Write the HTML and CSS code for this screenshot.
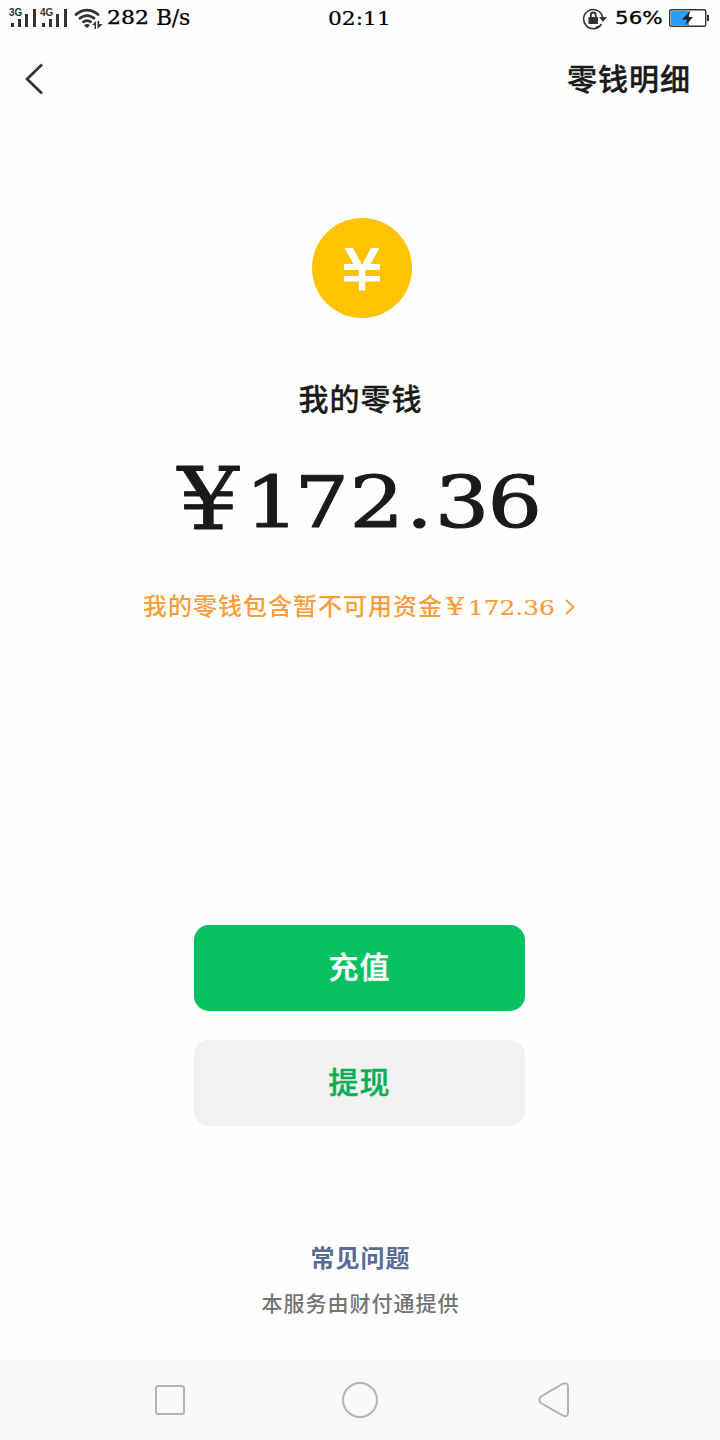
FILE: index.html
```html
<!DOCTYPE html>
<html lang="zh-CN">
<head>
<meta charset="utf-8">
<title>零钱</title>
<link rel="stylesheet" href="styles.css">
</head>
<body>
<div class="screen">
  <div class="status">
    <div class="status-left">
      <svg class="signal" width="104" height="36" viewBox="0 0 104 36" fill="#333">
        <text class="net" x="9" y="16">3G</text>
        <path d="M11 23h3v4h-3zM18 19h3v8h-3zM25 14h3v13h-3zM33 9h3v18h-3z"/>
        <text class="net" x="40" y="16">4G</text>
        <path d="M42 23h3v4h-3zM49 19h3v8h-3zM56 14h3v13h-3zM64 9h3v18h-3z"/>
        <g fill="none" stroke="#333" stroke-width="2.6">
          <path d="M75 15.200Q87 5 99 15.200"/><path d="M79 19Q87 12.200 95 19"/><path d="M82.500 22.500Q87 18.700 91.500 22.500"/>
        </g>
        <path d="M84 25.300Q87 22.800 90 25.300L87 28zM92 25l4-4v8h-1.500v-4zM97.500 21v8l5-5h-3.300v-3z"/>
      </svg>
      <span class="speed"><span class="speed-num">282</span><span class="unit">B/s</span></span>
    </div>
    <span class="clock">02:11</span>
    <div class="status-right">
      <svg width="26" height="24" viewBox="0 0 26 24">
        <path d="M19.500 18A9.600 9.600 0 1 1 20.600 11M18.500 19.500A9.600 9.600 0 0 1 14 21.400" fill="none" stroke="#333" stroke-width="1.600"/>
        <path d="M17 11h8l-4 5z" fill="#333"/>
        <path d="M6.500 11h9.500v7H6.500z" fill="#333"/>
        <path d="M8.800 11V9a2.500 2.500 0 0 1 5 0v2" fill="none" stroke="#333" stroke-width="1.800"/>
      </svg>
      <span class="percent">56%</span>
      <svg width="41" height="20" viewBox="0 0 41 20">
        <rect x=".7" y="1.700" width="36" height="16.600" rx="1.500" fill="#fff" stroke="#333" stroke-width="1.400"/>
        <path d="M2 3h18v14H2z" fill="#259ffb"/>
        <path d="M21.500 2.500l-8.500 9h5l-1.500 6 7.500-8.500h-4.500z" fill="#222"/>
        <path d="M38 7h2v6h-2z" fill="#333"/>
      </svg>
    </div>
  </div>
  <header class="header">
    <svg width="22" height="34" viewBox="0 0 22 34"><path d="M18 2.500L3 17l15 14.500" fill="none" stroke="#333" stroke-width="2.700"/></svg>
    <span class="detail">零钱明细</span>
  </header>
  <main class="main">
    <svg class="coin" width="100" height="100" viewBox="0 0 100 100">
      <circle cx="50" cy="50" r="50" fill="#ffc300"/>
      <path d="M32.500 30h8.500l8.500 16h1L59 30h8.500l-9 16h9.500v6H53.200v6H68v5.500H53.200V72.500h-6.400V63.500H32V58h14.800v-6H32v-6h9.500z" fill="#fff"/>
    </svg>
    <h1 class="title">我的零钱</h1>
    <svg class="amount" width="400" height="100" viewBox="0 0 400 100">
      <text class="yen" transform="translate(17.500 78) scale(1.130 1)">¥</text>
      <text class="digits" transform="translate(80 75.500) scale(1.210 1)" x="4 45 90.500 137 161 204.500">172.36</text>
    </svg>
    <div class="notice"><span class="notice-text">我的零钱包含暂不可用资金</span><span class="notice-yen">¥</span><span class="notice-num">172.36</span>
      <svg width="12" height="18" viewBox="0 0 12 18"><path d="M2 2l7.500 7L2 16" fill="none" stroke="#fa9d3b" stroke-width="1.800"/></svg>
    </div>
    <div class="actions">
      <button class="btn primary">充值</button>
      <button class="btn secondary">提现</button>
    </div>
    <div class="faq">常见问题</div>
    <div class="provider">本服务由财付通提供</div>
  </main>
  <nav class="nav">
    <svg width="720" height="80" viewBox="0 0 720 80" fill="none" stroke="#b4b4b4" stroke-width="2">
      <rect x="156" y="26" width="28" height="28" rx="2.500"/>
      <circle cx="360" cy="40" r="17"/>
      <path d="M541 36.500L562 24.200Q568 21.500 568 27V52.500Q568 58 562 55.200L541 43Q537.500 39.800 541 36.500z"/>
    </svg>
  </nav>
</div>
</body>
</html>
```
FILE: styles.css
```css
* { box-sizing: border-box; }
body { margin: 0; background: #fefefe; color: #1a1a1a; font-family: "Noto Sans CJK SC", sans-serif; font-weight: 500; }
svg { display: block; flex: none; }
.screen { width: 720px; height: 1440px; display: flex; flex-direction: column; }
.status { height: 36px; display: grid; grid-template: 36px / 260px 200px 260px; align-items: center; color: #000; font: 18px/36px "DejaVu Serif", serif; white-space: nowrap; }
.status-left, .status-right { display: flex; align-items: center; }
.net { font: bold 10px "Liberation Sans", sans-serif; }
.speed { margin-left: 3px; display: flex; line-height: 34px; -webkit-text-stroke: .3px #000; }
.speed-num { width: 49px; transform: scaleX(1.22); transform-origin: left; }
.unit { font-size: 22px; letter-spacing: -.3px; -webkit-text-stroke: .2px #000; }
.clock { padding: 2px 1px 0 0; text-align: center; transform: scaleX(1.21); -webkit-text-stroke: .2px #000; }
.status-right { padding-right: 10px; justify-content: flex-end; }
.percent { width: 48px; margin: 0 6px 0 7px; font: 18px/34px "DejaVu Sans", sans-serif; transform: scaleX(1.19); transform-origin: left; -webkit-text-stroke: .3px #000; }
.header { height: 86px; padding: 0 29px 0 24px; display: flex; align-items: center; justify-content: space-between; }
.detail { padding-bottom: 5px; font-size: 30px; line-height: 44px; letter-spacing: 1px; -webkit-text-stroke: .4px; }
.main { flex: 1; display: flex; flex-direction: column; align-items: center; }
.coin { margin: 96px 0 0 4px; }
.title { margin: 57px 0 0; padding-left: 1px; font-size: 30px; line-height: 44px; font-weight: 500; letter-spacing: 1px; -webkit-text-stroke: .3px; }
.amount { margin-top: 32px; fill: #1a1a1a; stroke: #1a1a1a; stroke-linejoin: round; }
.yen { font: 86px "DejaVu Serif", serif; stroke-width: .8px; }
.digits { font: 71px "DejaVu Serif", serif; stroke-width: 1.1px; }
.notice { margin: 34px 1px 0 0; height: 44px; display: flex; align-items: center; color: #fa9d3b; font-size: 24px; letter-spacing: 1px; }
.notice-text { padding-bottom: 5px; }
.notice-yen, .notice-num { font-family: "DejaVu Serif", serif; -webkit-text-stroke: .2px; }
.notice-yen { width: 25px; text-align: center; transform: scaleX(1.2); }
.notice-num { width: 88px; padding-top: 1px; font-size: 20px; letter-spacing: 0; transform: scaleX(1.24); transform-origin: left; }
.notice svg { margin-left: 8px; }
.actions { margin: 296px 1px 0 0; display: grid; gap: 29px; }
.btn { width: 331px; height: 86px; border: 0; border-radius: 15px; font: 500 30px/44px "Noto Sans CJK SC", sans-serif; letter-spacing: 1px; padding: 0 0 6px; -webkit-text-stroke: .4px; }
.primary { background: #07c160; color: #fff; }
.secondary { background: #f1f1f1; color: #06ae56; }
.faq { margin-top: 113px; padding-left: 1px; font-size: 24px; line-height: 36px; font-weight: 700; letter-spacing: 1px; color: #576b95; }
.provider { margin-top: 12px; padding-left: 1px; font-size: 21px; line-height: 30px; letter-spacing: 1px; color: #737373; }
.nav { height: 80px; background: #f9f9f9; }
```
